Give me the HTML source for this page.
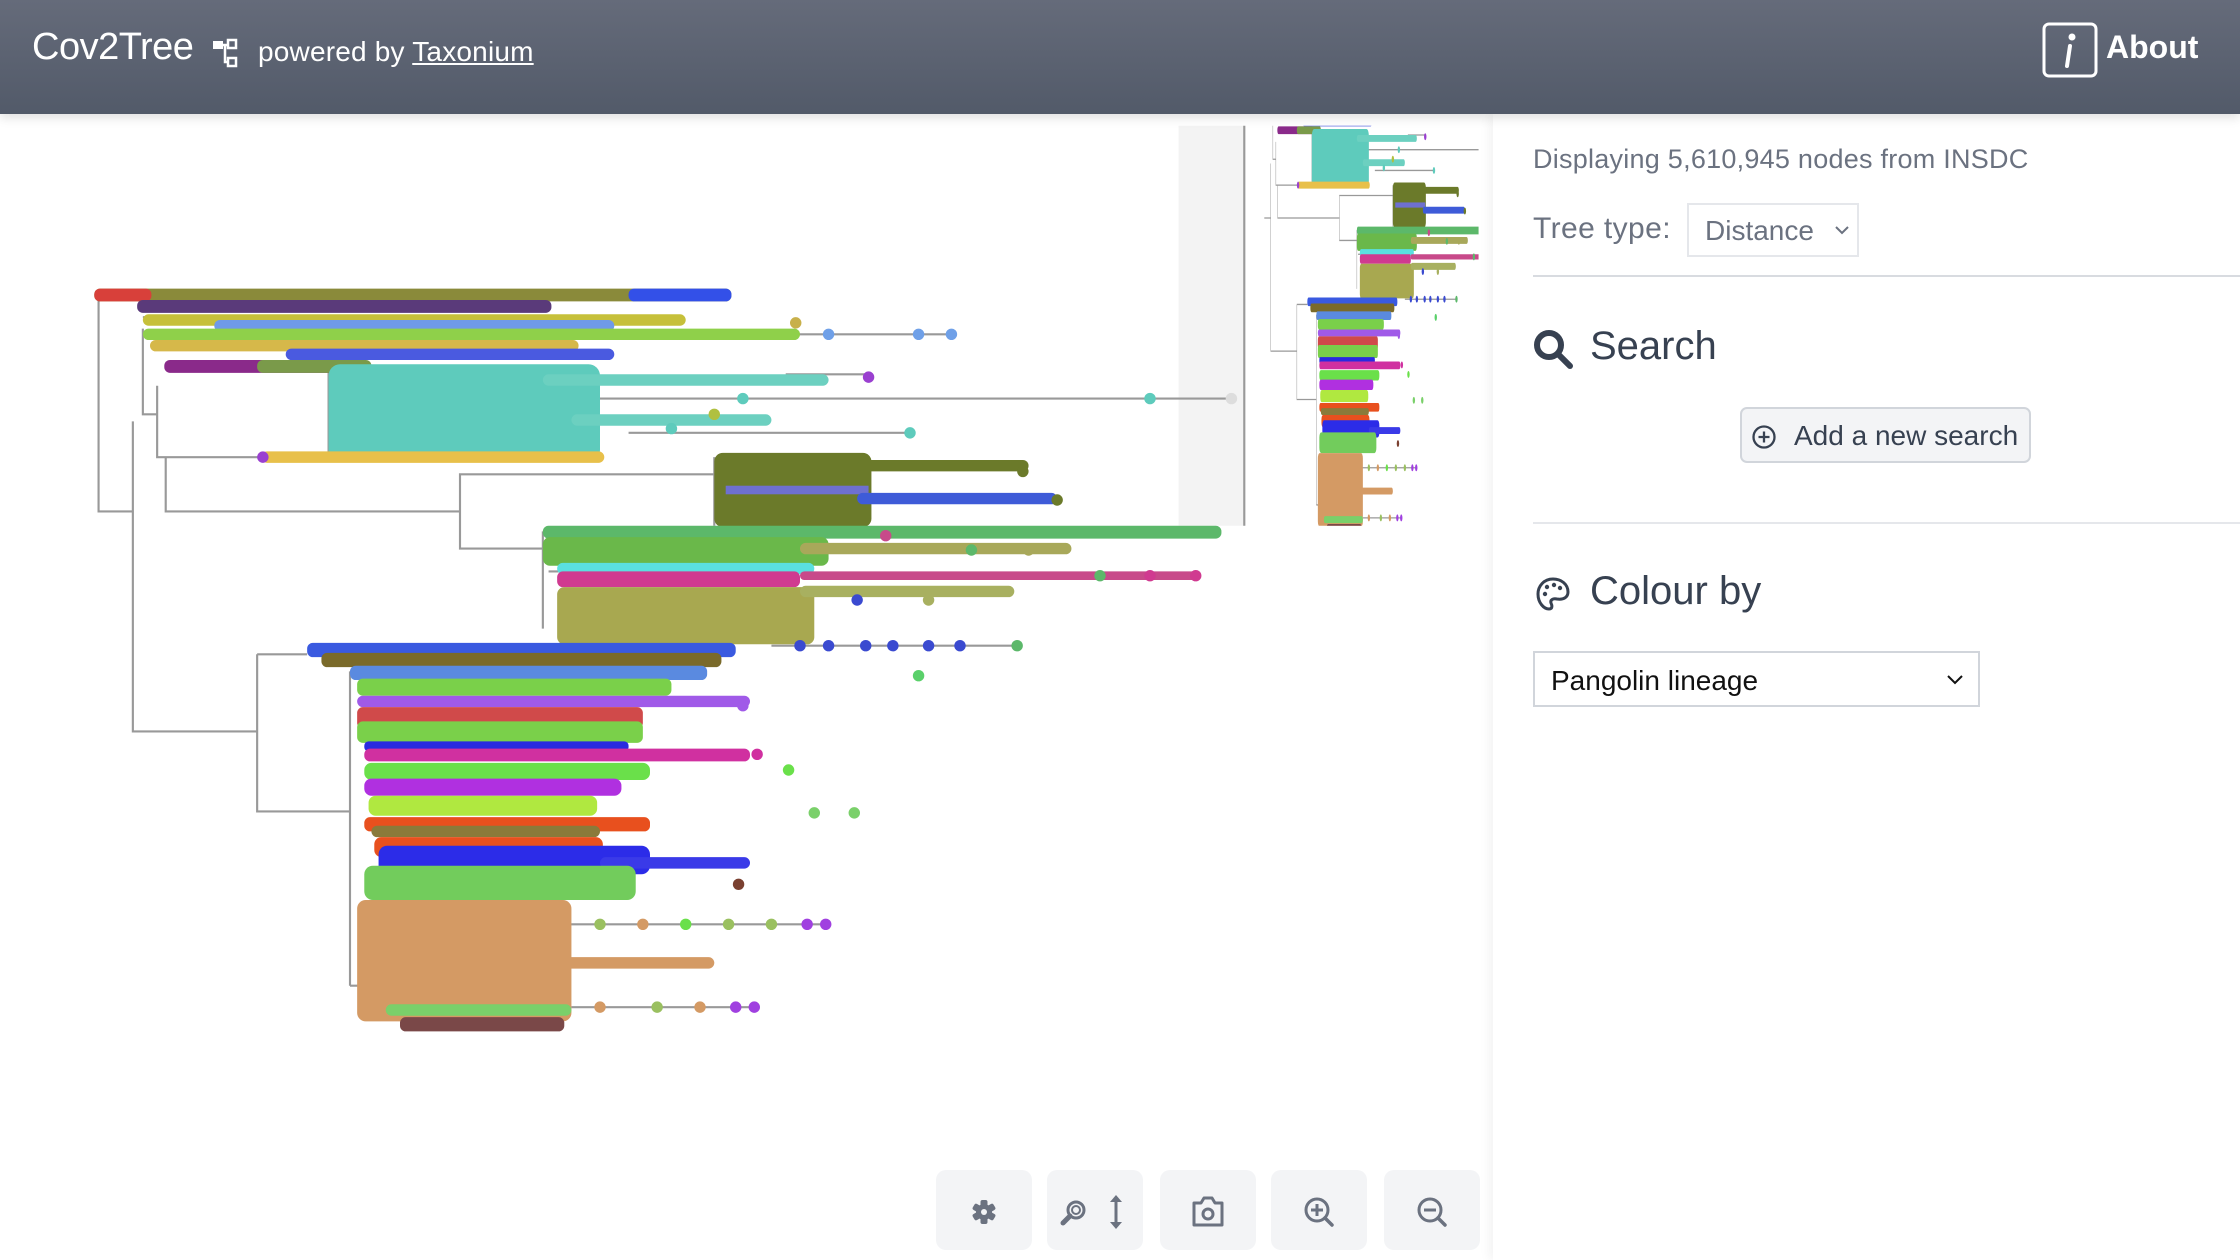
<!DOCTYPE html>
<html><head><meta charset="utf-8">
<style>
*{margin:0;padding:0;box-sizing:border-box}
body{width:2240px;height:1260px;overflow:hidden;background:#fff;font-family:"Liberation Sans",sans-serif;position:relative}
.hdr{position:absolute;left:0;top:0;width:2240px;height:114px;background:linear-gradient(#656b7a,#525a69);box-shadow:0 4px 10px rgba(0,0,0,.12);z-index:5}
.t{position:absolute;white-space:nowrap}
.panel{position:absolute;left:1493px;top:114px;width:747px;height:1146px;background:#fff;box-shadow:-4px 0 10px rgba(0,0,0,.05);z-index:3}
.btn{position:absolute;top:1170px;width:96px;height:80px;background:#f3f4f6;border-radius:10px;z-index:4}
.btn svg{position:absolute;left:0;top:0}
</style></head><body>
<div class="hdr">
 <div class="t" style="left:32px;top:26px;font-size:38px;color:#fff;letter-spacing:-0.5px">Cov2Tree</div>
 <svg style="position:absolute;left:212px;top:38px" width="34" height="32" viewBox="0 0 34 32"><rect x="1" y="3" width="10" height="8" fill="#fff"/><rect x="16" y="2" width="8" height="8" fill="none" stroke="#fff" stroke-width="2.5"/><rect x="16" y="20" width="8" height="8" fill="none" stroke="#fff" stroke-width="2.5"/><path d="M11 7H16M13 7V24H16" stroke="#fff" stroke-width="2.5" fill="none"/></svg>
 <div class="t" style="left:258px;top:36px;font-size:28px;color:#fff;letter-spacing:0.2px">powered by <span style="text-decoration:underline">Taxonium</span></div>
 <svg style="position:absolute;left:2042px;top:22px" width="56" height="56" viewBox="0 0 56 56"><rect x="2" y="2" width="52" height="52" rx="5" fill="none" stroke="#fff" stroke-width="3"/><circle cx="30" cy="15" r="3.5" fill="#fff"/><path d="M28 24L25 44" stroke="#fff" stroke-width="4" stroke-linecap="round"/></svg>
 <div class="t" style="left:2106px;top:29px;font-size:32px;font-weight:bold;color:#fff">About</div>
</div>

<svg style="position:absolute;left:0;top:0" width="2240" height="1260" viewBox="0 0 1568 882">
<defs>
<g id="tree">
 <g stroke="#999" stroke-width="1.5" fill="none">
  <path d="M69 207V358H93M69 207H100M93 295V512H180M100 230V290H110M100 222H230M110 270V320H185M116 320V358H322V332H500M322 332V384H380M180 458V568H245M180 458H215M245 470V690M245 690H270M500 320V368M380 372V440M230 260V318M384 400H395"/>
  <path d="M380 279H805M805 279H862" />
  <path d="M500 234H667M550 262H610M440 303H638M540 452H712M380 647H580M400 705H530"/>
 </g>
 <g>
  <rect x="66" y="202" width="446" height="9" rx="4" fill="#8a8a3a"/>
  <rect x="66" y="202" width="40" height="9" rx="4" fill="#d8403a"/>
  <rect x="440" y="202" width="72" height="9" rx="4" fill="#3350e8"/>
  <rect x="96" y="210" width="290" height="9" rx="4" fill="#5a3a7a"/>
  <rect x="100" y="220" width="380" height="8" rx="4" fill="#c6c03a"/>
  <rect x="150" y="224" width="280" height="8" rx="4" fill="#6f9ae8"/>
  <rect x="100" y="230" width="460" height="8" rx="4" fill="#8fd04a"/>
  <rect x="105" y="238" width="300" height="8" rx="4" fill="#d6b84a"/>
  <rect x="200" y="244" width="230" height="8" rx="4" fill="#4a5ae0"/>
  <rect x="115" y="252" width="120" height="9" rx="4" fill="#8a2a8a"/>
  <rect x="180" y="252" width="80" height="9" rx="4" fill="#7a9a4a"/>
  <rect x="230" y="255" width="190" height="68" rx="8" fill="#5ecbbc"/>
  <rect x="380" y="262" width="200" height="8" rx="4" fill="#6cd0c0"/>
  <rect x="400" y="290" width="140" height="8" rx="4" fill="#6cd0c0"/>
  <rect x="183" y="316" width="240" height="8" rx="4" fill="#e8c04a"/>
  <rect x="500" y="317" width="110" height="52" rx="6" fill="#6b7a2a"/>
  <rect x="508" y="340" width="100" height="6" fill="#6e70d0"/>
  <rect x="600" y="322" width="120" height="8" rx="4" fill="#6b7a2a"/>
  <rect x="600" y="345" width="140" height="8" rx="4" fill="#3e5bd8"/>
  <rect x="380" y="368" width="475" height="9" rx="4" fill="#5cb86a"/>
  <rect x="380" y="376" width="200" height="20" rx="5" fill="#6ab84a"/>
  <rect x="560" y="380" width="190" height="8" rx="4" fill="#a8a85a"/>
  <rect x="390" y="394" width="180" height="8" rx="4" fill="#5ae0e0"/>
  <rect x="390" y="400" width="170" height="11" rx="4" fill="#d03a90"/>
  <rect x="560" y="400" width="280" height="6" rx="3" fill="#c84a8a"/>
  <rect x="390" y="411" width="180" height="40" rx="5" fill="#a8a850"/>
  <rect x="560" y="410" width="150" height="8" rx="4" fill="#a8b060"/>
  <rect x="215" y="450" width="300" height="10" rx="4" fill="#3a5ae0"/>
  <rect x="225" y="457" width="280" height="10" rx="4" fill="#7a6a2a"/>
  <rect x="245" y="466" width="250" height="10" rx="4" fill="#5a8ae0"/>
  <rect x="250" y="475" width="220" height="12" rx="4" fill="#7ad04a"/>
  <rect x="250" y="487" width="275" height="8" rx="4" fill="#a05ae8"/>
  <rect x="250" y="495" width="200" height="15" rx="4" fill="#d04a4a"/>
  <rect x="250" y="505" width="200" height="15" rx="4" fill="#7ad04a"/>
  <rect x="255" y="519" width="185" height="7" rx="3" fill="#2a2ae0"/>
  <rect x="255" y="524" width="270" height="9" rx="4" fill="#d030a0"/>
  <rect x="255" y="534" width="200" height="12" rx="5" fill="#6ae04a"/>
  <rect x="255" y="545" width="180" height="12" rx="5" fill="#b030e0"/>
  <rect x="258" y="557" width="160" height="14" rx="5" fill="#b0e840"/>
  <rect x="255" y="572" width="200" height="10" rx="4" fill="#e8501e"/>
  <rect x="260" y="578" width="160" height="8" rx="4" fill="#8a7a3a"/>
  <rect x="262" y="586" width="160" height="14" rx="5" fill="#e8501e"/>
  <rect x="265" y="592" width="190" height="20" rx="6" fill="#2c2ce8"/>
  <rect x="420" y="600" width="105" height="8" rx="4" fill="#3a3ae8"/>
  <rect x="255" y="606" width="190" height="24" rx="6" fill="#72cc5c"/>
  <rect x="250" y="630" width="150" height="85" rx="6" fill="#d49a64"/>
  <rect x="390" y="670" width="110" height="8" rx="4" fill="#d49a64"/>
  <rect x="270" y="703" width="130" height="8" rx="4" fill="#7ad06a"/>
  <rect x="280" y="712" width="115" height="10" rx="4" fill="#7a4848"/>
 </g>
 <g>
  <circle cx="580" cy="234" r="4" fill="#6fa0e8"/><circle cx="643" cy="234" r="4" fill="#6fa0e8"/><circle cx="666" cy="234" r="4" fill="#6fa0e8"/>
  <circle cx="557" cy="226" r="4" fill="#c8b04a"/><circle cx="608" cy="264" r="4" fill="#9a40d0"/>
  <circle cx="805" cy="279" r="4" fill="#5ecbbc"/><circle cx="862" cy="279" r="4" fill="#ddd"/>
  <circle cx="637" cy="303" r="4" fill="#5ecbbc"/><circle cx="184" cy="320" r="4" fill="#9a40d0"/>
  <circle cx="740" cy="350" r="4" fill="#6b7a2a"/><circle cx="716" cy="330" r="4" fill="#6b7a2a"/>
  <circle cx="837" cy="403" r="4" fill="#d03a90"/><circle cx="805" cy="403" r="4" fill="#d03a90"/><circle cx="770" cy="403" r="4" fill="#5cb86a"/>
  <circle cx="712" cy="452" r="4" fill="#5cb86a"/><circle cx="643" cy="473" r="4" fill="#5ad06a"/>
  <circle cx="552" cy="539" r="4" fill="#6ae04a"/><circle cx="598" cy="569" r="4" fill="#7ad06a"/><circle cx="570" cy="569" r="4" fill="#7ad06a"/>
  <circle cx="517" cy="619" r="4" fill="#7a4030"/><circle cx="578" cy="647" r="4" fill="#a040e0"/><circle cx="528" cy="705" r="4" fill="#a040e0"/>
  <circle cx="530" cy="528" r="4" fill="#d030a0"/><circle cx="520" cy="494" r="4" fill="#a05ae8"/>
  <circle cx="560" cy="452" r="4" fill="#3a4ad0"/><circle cx="580" cy="452" r="4" fill="#3a4ad0"/><circle cx="606" cy="452" r="4" fill="#3a4ad0"/><circle cx="625" cy="452" r="4" fill="#3a4ad0"/><circle cx="650" cy="452" r="4" fill="#3a4ad0"/><circle cx="672" cy="452" r="4" fill="#3a4ad0"/>
  <circle cx="420" cy="647" r="4" fill="#9ac060"/><circle cx="450" cy="647" r="4" fill="#d49a64"/><circle cx="480" cy="647" r="4" fill="#6ae04a"/><circle cx="510" cy="647" r="4" fill="#9ac060"/><circle cx="540" cy="647" r="4" fill="#9ac060"/><circle cx="565" cy="647" r="4" fill="#a040e0"/>
  <circle cx="420" cy="705" r="4" fill="#d49a64"/><circle cx="460" cy="705" r="4" fill="#9ac060"/><circle cx="490" cy="705" r="4" fill="#d49a64"/><circle cx="515" cy="705" r="4" fill="#a040e0"/>
  <circle cx="520" cy="279" r="4" fill="#5ecbbc"/><circle cx="470" cy="300" r="4" fill="#5ecbbc"/><circle cx="500" cy="290" r="4" fill="#b0c040"/>
  <circle cx="620" cy="375" r="4" fill="#c84a8a"/><circle cx="680" cy="385" r="4" fill="#5cb86a"/><circle cx="720" cy="385" r="4" fill="#a8a85a"/><circle cx="600" cy="420" r="4" fill="#3a4ad0"/><circle cx="650" cy="420" r="4" fill="#a8b060"/>
 </g>
</g>
<clipPath id="mc"><rect x="885" y="88" width="150" height="280"/></clipPath>
</defs>
<rect x="825" y="88" width="46" height="280" fill="#f3f3f3"/>
<line x1="871" y1="88" x2="871" y2="368" stroke="#999" stroke-width="1.5"/>
<use href="#tree"/>
<g clip-path="url(#mc)"><use href="#tree" transform="translate(870,-64) scale(0.21,0.605)"/></g>
</svg>

<div class="panel">
 <div class="t" style="left:40px;top:30px;font-size:27px;color:#6b7280;letter-spacing:0.25px">Displaying 5,610,945 nodes from INSDC</div>
 <div class="t" style="left:40px;top:98px;font-size:30px;color:#6b7280;letter-spacing:0.4px">Tree type:</div>
 <div style="position:absolute;left:194px;top:89px;width:172px;height:54px;border:2px solid #e5e7eb;background:#fff"><span class="t" style="left:16px;top:10px;font-size:28px;color:#6b7280">Distance</span><svg style="position:absolute;left:146px;top:20px" width="14" height="10"><path d="M1 2L7 8L13 2" stroke="#6b7280" stroke-width="2" fill="none"/></svg></div>
 <div style="position:absolute;left:40px;top:161px;width:707px;height:2px;background:#d8dbe0"></div>
 <svg style="position:absolute;left:40px;top:215px" width="42" height="42" viewBox="0 0 42 42"><circle cx="16" cy="16" r="12" fill="none" stroke="#374151" stroke-width="6"/><path d="M25 25L37 37" stroke="#374151" stroke-width="6" stroke-linecap="round"/></svg>
 <div class="t" style="left:97px;top:210px;font-size:40px;color:#374151">Search</div>
 <div style="position:absolute;left:247px;top:293px;width:291px;height:56px;border:2px solid #d1d5db;border-radius:7px;background:#f3f4f6"><svg style="position:absolute;left:9px;top:15px" width="26" height="26" viewBox="0 0 26 26"><circle cx="13" cy="13" r="10.5" fill="none" stroke="#374151" stroke-width="2.3"/><path d="M13 7.5V18.5M7.5 13H18.5" stroke="#374151" stroke-width="2.3"/></svg><span class="t" style="left:52px;top:11px;font-size:28px;color:#374151">Add a new search</span></div>
 <div style="position:absolute;left:40px;top:408px;width:707px;height:2px;background:#e5e7eb"></div>
 <svg style="position:absolute;left:42px;top:462px" width="36" height="36" viewBox="0 0 36 36"><path d="M18 3C9 3 3 10 3 18C3 27 9 33 14 33C18 33 17 29 16 27C15 24 18 22 22 23C29 24 33 21 33 16C33 8 26 3 18 3Z" fill="none" stroke="#374151" stroke-width="3"/><circle cx="10" cy="18" r="2.2" fill="#374151"/><circle cx="12" cy="11" r="2.2" fill="#374151"/><circle cx="19" cy="9" r="2.2" fill="#374151"/><circle cx="25" cy="12" r="2.2" fill="#374151"/></svg>
 <div class="t" style="left:97px;top:455px;font-size:40px;color:#374151">Colour by</div>
 <div style="position:absolute;left:40px;top:537px;width:447px;height:56px;border:2px solid #d1d5db;background:#fff"><span class="t" style="left:16px;top:12px;font-size:28px;color:#111">Pangolin lineage</span><svg style="position:absolute;left:412px;top:22px" width="16" height="10"><path d="M1 1L8 8L15 1" stroke="#111" stroke-width="2" fill="none"/></svg></div>
</div>

<div class="btn" style="left:936px"><svg width="96" height="80" viewBox="0 0 96 80"><g transform="translate(48,42)" fill="#6b7280"><circle r="8"/><g><rect x="-3.5" y="-12" width="7" height="24" rx="2"/><rect x="-3.5" y="-12" width="7" height="24" rx="2" transform="rotate(60)"/><rect x="-3.5" y="-12" width="7" height="24" rx="2" transform="rotate(120)"/></g><circle r="3" fill="#f3f4f6"/></g></svg></div>
<div class="btn" style="left:1047px"><svg width="96" height="80" viewBox="0 0 96 80"><circle cx="29" cy="40" r="8" fill="none" stroke="#6b7280" stroke-width="3"/><circle cx="29" cy="40" r="4" fill="none" stroke="#6b7280" stroke-width="2"/><path d="M23 46L16 53" stroke="#6b7280" stroke-width="5" stroke-linecap="round"/><path d="M69 30V54" stroke="#6b7280" stroke-width="3"/><path d="M63 32L69 25L75 32ZM63 52L69 59L75 52Z" fill="#6b7280"/></svg></div>
<div class="btn" style="left:1160px"><svg width="96" height="80" viewBox="0 0 96 80"><path d="M34 33H41L44 28H52L55 33H62V55H34Z" fill="none" stroke="#6b7280" stroke-width="3" stroke-linejoin="round"/><circle cx="48" cy="44" r="5" fill="none" stroke="#6b7280" stroke-width="3"/></svg></div>
<div class="btn" style="left:1271px"><svg width="96" height="80" viewBox="0 0 96 80"><circle cx="46" cy="40" r="11" fill="none" stroke="#6b7280" stroke-width="3"/><path d="M46 34V46M40 40H52" stroke="#6b7280" stroke-width="3"/><path d="M54 48L61 55" stroke="#6b7280" stroke-width="3.5" stroke-linecap="round"/></svg></div>
<div class="btn" style="left:1384px"><svg width="96" height="80" viewBox="0 0 96 80"><circle cx="46" cy="40" r="11" fill="none" stroke="#6b7280" stroke-width="3"/><path d="M40 40H52" stroke="#6b7280" stroke-width="3"/><path d="M54 48L61 55" stroke="#6b7280" stroke-width="3.5" stroke-linecap="round"/></svg></div>
</body></html>
